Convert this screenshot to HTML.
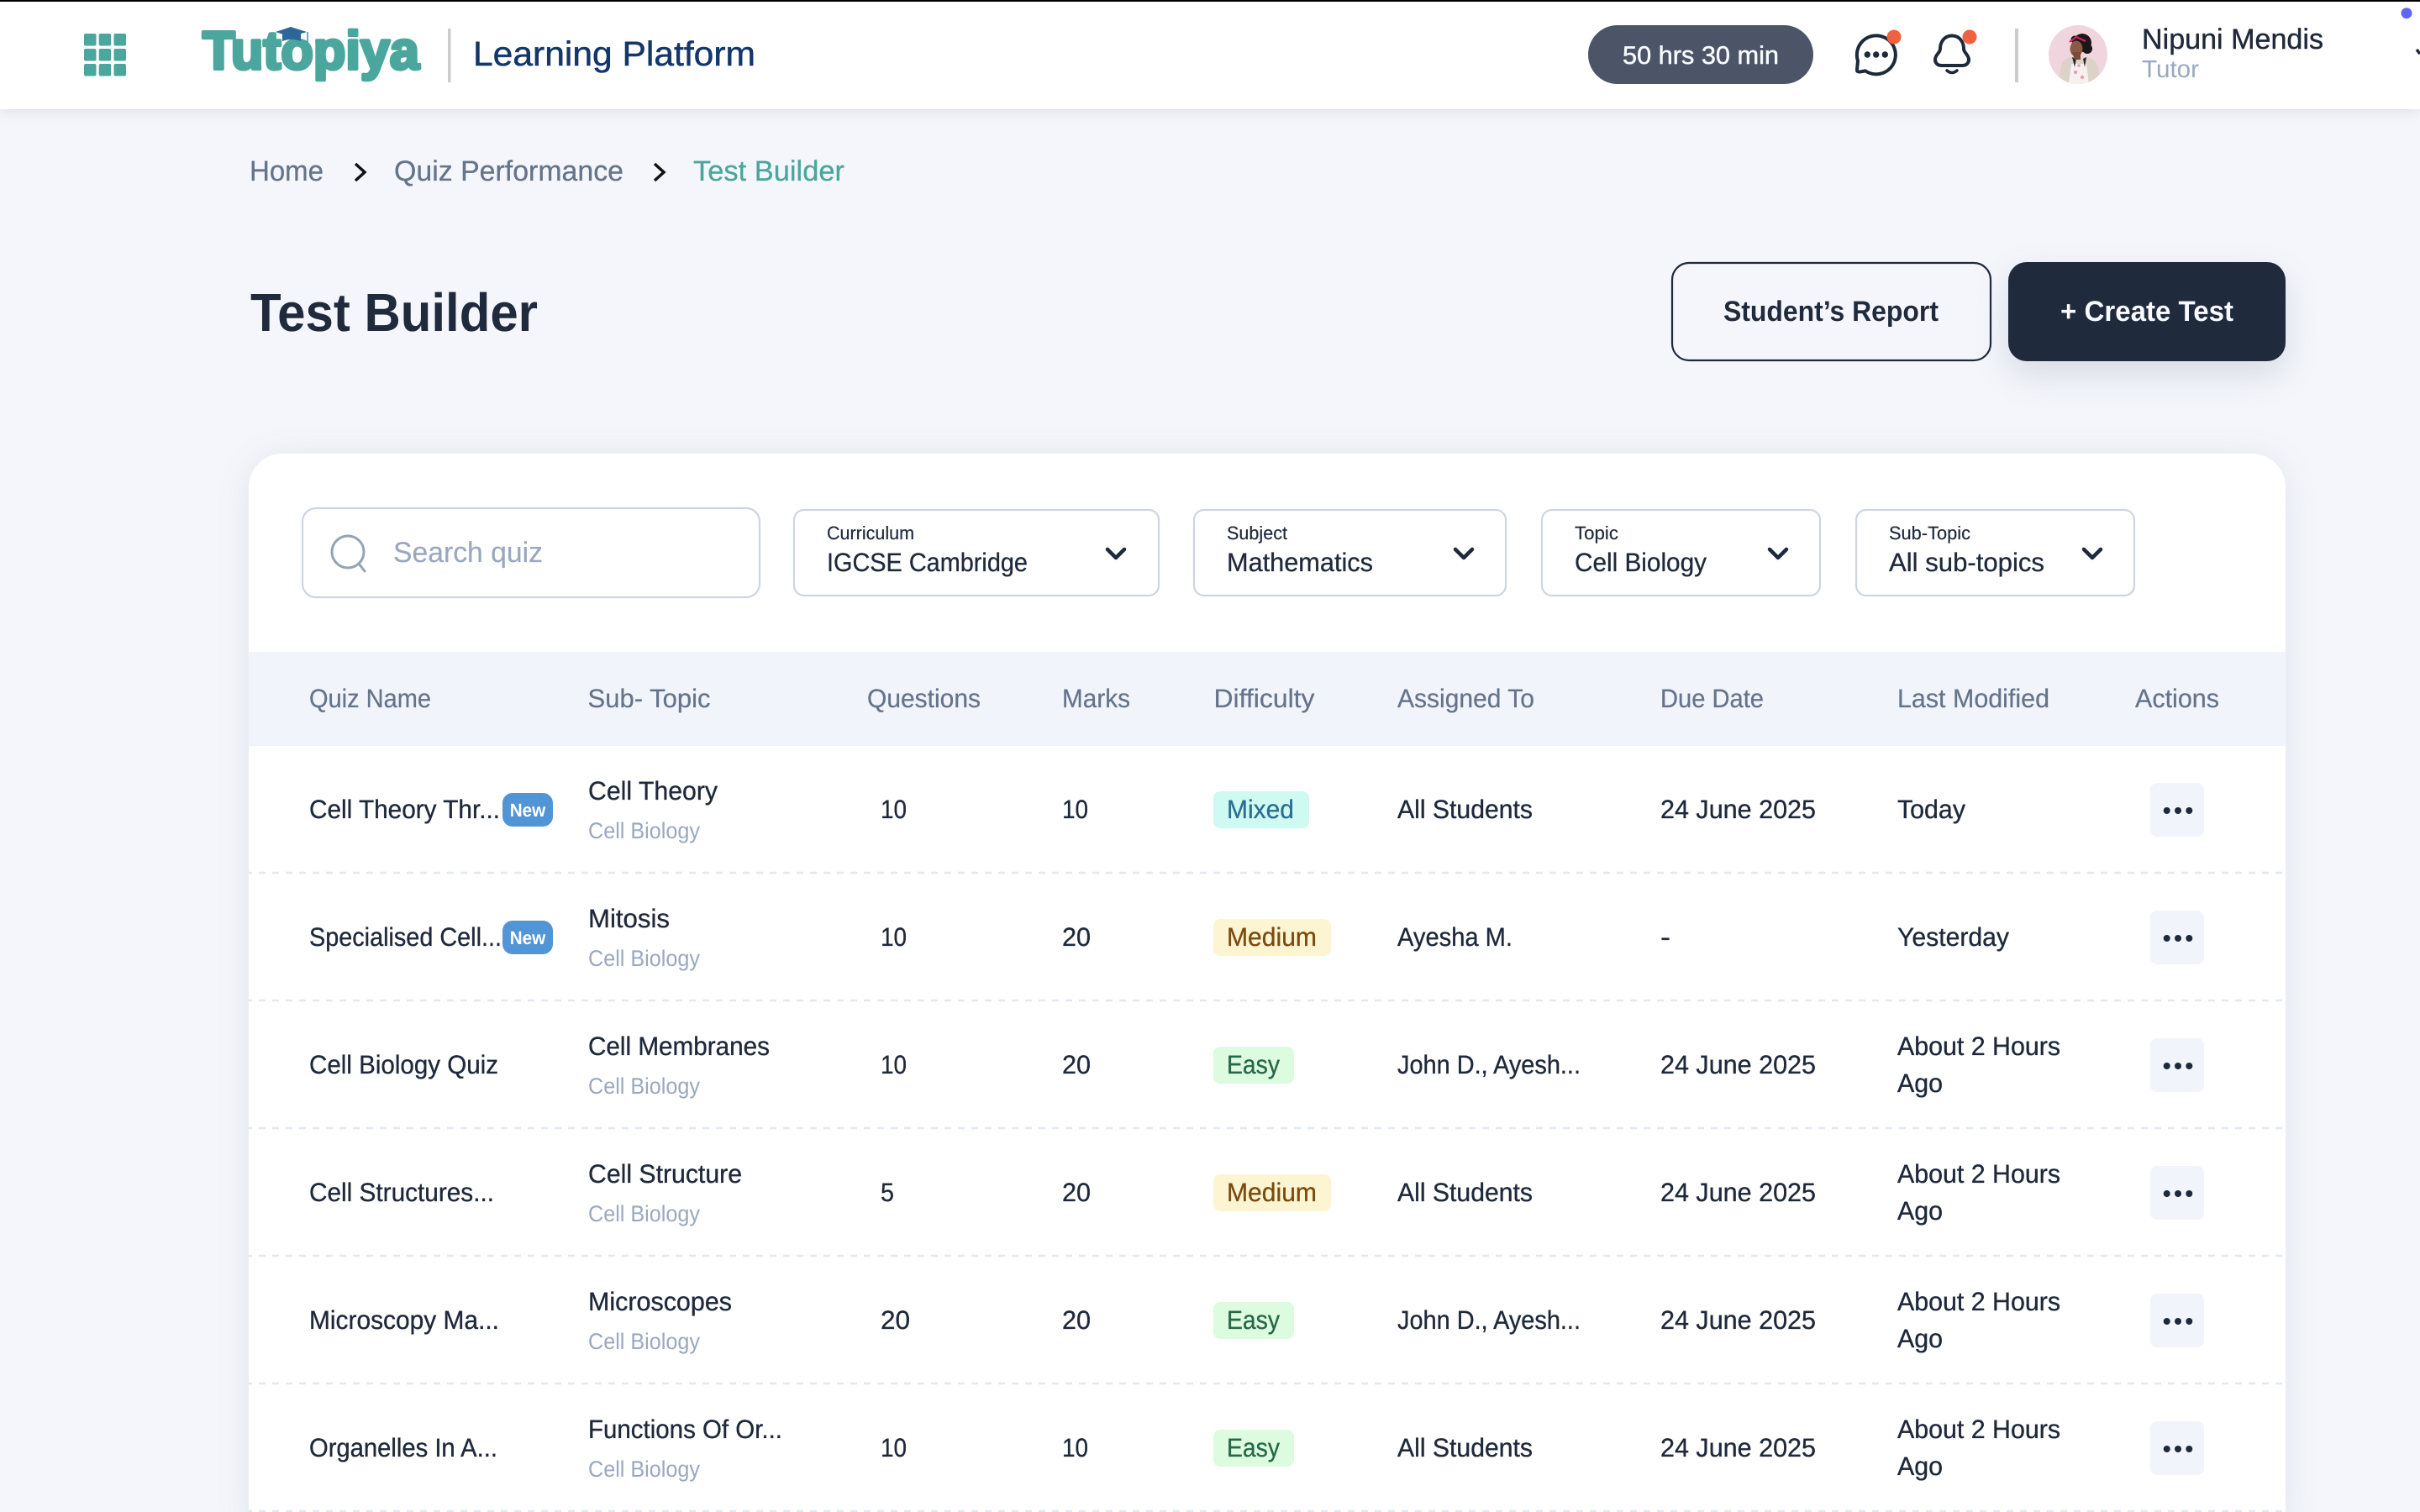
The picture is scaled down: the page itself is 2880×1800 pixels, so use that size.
<!DOCTYPE html>
<html lang="en">
<head>
<meta charset="utf-8">
<title>Test Builder</title>
<style>
html,body{margin:0;padding:0;width:2880px;height:1800px;overflow:hidden;background:#F4F6FB;font-family:"Liberation Sans",sans-serif}
.page{position:relative;width:2880px;height:1800px;overflow:hidden}
.hdr{position:absolute;left:0;top:0;width:2880px;height:130px;background:#fff;box-shadow:0 3px 14px rgba(30,41,59,.1)}
.top{position:absolute;left:0;top:0;width:2880px;height:2px;background:#000}
.card{position:absolute;left:296px;top:540px;width:2424px;height:1300px;background:#fff;border-radius:40px;box-shadow:0 4px 40px rgba(100,116,139,.13)}
.cbtn{position:absolute;left:2390px;top:312px;width:330px;height:118px;border-radius:22px;background:#1F2A3D;box-shadow:0 16px 40px rgba(100,116,139,.2)}
svg{position:absolute;left:0;top:0}
text{font-family:"Liberation Sans",sans-serif;text-rendering:geometricPrecision}
.m{font-size:31px;fill:#1E293B;stroke:#1E293B;stroke-width:.35px}
.s{font-size:27px;fill:#9AA8BF}
.h{font-size:31px;fill:#64748B;stroke:#64748B;stroke-width:.25px}
.l{font-size:22px;fill:#1E293B;stroke:#1E293B;stroke-width:.2px}
.v{font-size:31px;fill:#1E293B;stroke:#1E293B;stroke-width:.3px}
.b{font-size:34px;stroke-width:.3px}
.box{fill:#fff;stroke:#CDD5E2;stroke-width:2.2}
.chev{fill:none;stroke:#1E293B;stroke-width:4.5;stroke-linecap:round;stroke-linejoin:round}
.dash{stroke:#E2E8F0;stroke-width:2.6;stroke-dasharray:8 8;stroke-dashoffset:4;fill:none}
</style>
</head>
<body>
<div class="page">
<div class="hdr"></div>
<div class="top"></div>
<div class="card"></div>
<div class="cbtn"></div>
<svg width="2880" height="1800" viewBox="0 0 2880 1800" xmlns="http://www.w3.org/2000/svg">
<defs><clipPath id="av"><circle cx="2473" cy="65" r="35"/></clipPath></defs>

<!-- grid icon -->
<g fill="#4BA69D">
<rect x="100" y="40" width="14.5" height="14.5" rx="2"/><rect x="117.7" y="40" width="14.5" height="14.5" rx="2"/><rect x="135.5" y="40" width="14.5" height="14.5" rx="2"/>
<rect x="100" y="58" width="14.5" height="14.5" rx="2"/><rect x="117.7" y="58" width="14.5" height="14.5" rx="2"/><rect x="135.5" y="58" width="14.5" height="14.5" rx="2"/>
<rect x="100" y="76" width="14.5" height="14.5" rx="2"/><rect x="117.7" y="76" width="14.5" height="14.5" rx="2"/><rect x="135.5" y="76" width="14.5" height="14.5" rx="2"/>
</g>

<!-- logo -->
<text x="241" y="82" textLength="258" lengthAdjust="spacingAndGlyphs" font-size="64" font-weight="700" fill="#4BA69D" stroke="#4BA69D" stroke-width="4" stroke-linejoin="round">Tutopiya</text>
<path d="M336 40H358V49Q347 45 336 49Z" fill="#2C6799"/>
<path d="M328 38L346 32L365 38L346 44Z" fill="#2C6799"/>
<path d="M366 38V50" stroke="#2C6799" stroke-width="1.2"/>
<rect x="533" y="34" width="3.5" height="64" fill="#CCCCCC"/>
<text x="563" y="78" textLength="336" lengthAdjust="spacingAndGlyphs" font-size="41" fill="#14366B" stroke="#14366B" stroke-width=".5">Learning Platform</text>

<!-- right header -->
<rect x="1890" y="30" width="268" height="70" rx="35" fill="#4B5567"/>
<text x="1931" y="76" textLength="186" lengthAdjust="spacingAndGlyphs" font-size="30" fill="#F8FAFC" stroke="#F8FAFC" stroke-width=".5">50 hrs 30 min</text>

<path d="M2211 72.5A23 23 0 1 1 2220 84.4L2213.5 85.5Q2209.5 86 2210 82.5Z" fill="none" stroke="#1E293B" stroke-width="4" stroke-linejoin="round"/>
<circle cx="2222.3" cy="65" r="3.7" fill="#1E293B"/><circle cx="2232.7" cy="65" r="3.7" fill="#1E293B"/><circle cx="2243.3" cy="65" r="3.7" fill="#1E293B"/>
<circle cx="2254" cy="44" r="8.5" fill="#F0623F"/>

<path d="M2323 42.5C2332 42.5 2337 50 2337 58C2337 63 2343 65 2343 71C2343 75 2340 78 2336 78L2310 78C2306 78 2303 75 2303 71C2303 65 2309 63 2309 58C2309 50 2314 42.5 2323 42.5Z" fill="none" stroke="#1E293B" stroke-width="4"/>
<path d="M2317 84Q2323 89 2329 84" fill="none" stroke="#1E293B" stroke-width="3.5" stroke-linecap="round"/>
<circle cx="2344" cy="44" r="8.5" fill="#F0623F"/>

<rect x="2398" y="34" width="4" height="64" fill="#CCCCCC"/>

<!-- avatar -->
<g clip-path="url(#av)">
<rect x="2438" y="30" width="70" height="70" fill="#F0D5DF"/>
<path d="M2449 100L2453 78Q2456 69 2466 68L2484 68Q2494 70 2497 80L2500 100Z" fill="#DDD2C7"/>
<path d="M2462 100L2465 76H2483L2486 100Z" fill="#F6F0F0"/>
<circle cx="2470" cy="86" r="2.2" fill="#E8A0B0"/><circle cx="2478" cy="92" r="2.2" fill="#E8A0B0"/><circle cx="2474" cy="78" r="1.8" fill="#E8A0B0"/>
<path d="M2466 68L2469 80L2471 70ZM2483 68L2481 80L2479 70Z" fill="#2A2A2E"/>
<circle cx="2478" cy="51" r="11" fill="#1C1718"/><circle cx="2484" cy="58" r="6" fill="#1C1718"/><circle cx="2469" cy="47" r="4.5" fill="#1C1718"/>
<ellipse cx="2471" cy="58" rx="7.5" ry="9.5" fill="#8A5A45"/>
<path d="M2466 62L2469 71H2476L2476 62Z" fill="#7A4C38"/>
<path d="M2463 50L2471 44L2482 49" fill="none" stroke="#D81F6D" stroke-width="2.2"/>
</g>

<text x="2549" y="58" textLength="216" lengthAdjust="spacingAndGlyphs" font-size="34" fill="#1E293B" stroke="#1E293B" stroke-width=".4">Nipuni Mendis</text>
<text x="2549" y="92" textLength="68" lengthAdjust="spacingAndGlyphs" font-size="29" fill="#9AA8BF">Tutor</text>
<circle cx="2864" cy="15.7" r="6.5" fill="#6366F1"/>
<path d="M2876 59L2880 64" stroke="#1E293B" stroke-width="3.5" fill="none"/>

<!-- breadcrumb -->
<text class="b" x="297" y="215" textLength="88" lengthAdjust="spacingAndGlyphs" fill="#64748B" stroke="#64748B">Home</text>
<path d="M423 195L434 205L423 215" fill="none" stroke="#111" stroke-width="3.5"/>
<text class="b" x="469" y="215" textLength="273" lengthAdjust="spacingAndGlyphs" fill="#64748B" stroke="#64748B">Quiz Performance</text>
<path d="M779 195L790 205L779 215" fill="none" stroke="#111" stroke-width="3.5"/>
<text class="b" x="825" y="215" textLength="180" lengthAdjust="spacingAndGlyphs" fill="#4BA69D" stroke="#4BA69D">Test Builder</text>

<!-- title -->
<text x="298" y="394" textLength="342" lengthAdjust="spacingAndGlyphs" font-size="64" font-weight="700" fill="#1F2A3D">Test Builder</text>

<!-- buttons -->
<rect x="1990" y="313" width="379" height="116" rx="20" fill="none" stroke="#1F2A3D" stroke-width="2.2"/>
<text x="2051" y="382" textLength="256" lengthAdjust="spacingAndGlyphs" font-size="34" font-weight="700" fill="#1F2A3D">Student’s Report</text>
<text x="2452" y="382" textLength="206" lengthAdjust="spacingAndGlyphs" font-size="34" font-weight="700" fill="#F8FAFC">+ Create Test</text>

<!-- filters -->
<rect class="box" x="360" y="605" width="544" height="106" rx="16"/>
<circle cx="414" cy="657" r="19" fill="none" stroke="#94A3B8" stroke-width="3"/>
<path d="M427 671L434 680" stroke="#94A3B8" stroke-width="3" stroke-linecap="round"/>
<text x="468" y="669" textLength="178" lengthAdjust="spacingAndGlyphs" font-size="34" fill="#9AA8BF" stroke="#9AA8BF" stroke-width=".2">Search quiz</text>

<rect class="box" x="945" y="607" width="434" height="102" rx="12"/>
<text class="l" x="984" y="642" textLength="104" lengthAdjust="spacingAndGlyphs">Curriculum</text>
<text class="v" x="984" y="680" textLength="239" lengthAdjust="spacingAndGlyphs">IGCSE Cambridge</text>
<path class="chev" d="M1318 654L1328 664L1338 654"/>

<rect class="box" x="1421" y="607" width="371" height="102" rx="12"/>
<text class="l" x="1460" y="642" textLength="72" lengthAdjust="spacingAndGlyphs">Subject</text>
<text class="v" x="1460" y="680" textLength="174" lengthAdjust="spacingAndGlyphs">Mathematics</text>
<path class="chev" d="M1732 654L1742 664L1752 654"/>

<rect class="box" x="1835" y="607" width="331" height="102" rx="12"/>
<text class="l" x="1874" y="642" textLength="52" lengthAdjust="spacingAndGlyphs">Topic</text>
<text class="v" x="1874" y="680" textLength="157" lengthAdjust="spacingAndGlyphs">Cell Biology</text>
<path class="chev" d="M2106 654L2116 664L2126 654"/>

<rect class="box" x="2209" y="607" width="331" height="102" rx="12"/>
<text class="l" x="2248" y="642" textLength="97" lengthAdjust="spacingAndGlyphs">Sub-Topic</text>
<text class="v" x="2248" y="680" textLength="185" lengthAdjust="spacingAndGlyphs">All sub-topics</text>
<path class="chev" d="M2480 654L2490 664L2500 654"/>

<!-- table head -->
<rect x="296" y="776" width="2424" height="112" fill="#F1F4FA"/>
<text class="h" x="368" y="842" textLength="145" lengthAdjust="spacingAndGlyphs">Quiz Name</text>
<text class="h" x="699.5" y="842" textLength="146" lengthAdjust="spacingAndGlyphs">Sub- Topic</text>
<text class="h" x="1032" y="842" textLength="135" lengthAdjust="spacingAndGlyphs">Questions</text>
<text class="h" x="1264" y="842" textLength="81" lengthAdjust="spacingAndGlyphs">Marks</text>
<text class="h" x="1444.5" y="842" textLength="120" lengthAdjust="spacingAndGlyphs">Difficulty</text>
<text class="h" x="1663" y="842" textLength="163" lengthAdjust="spacingAndGlyphs">Assigned To</text>
<text class="h" x="1976" y="842" textLength="123" lengthAdjust="spacingAndGlyphs">Due Date</text>
<text class="h" x="2258" y="842" textLength="181" lengthAdjust="spacingAndGlyphs">Last Modified</text>
<text class="h" x="2541" y="842" textLength="100" lengthAdjust="spacingAndGlyphs">Actions</text>

<!-- row dashed lines -->
<path class="dash" d="M296 1039H2720"/>
<path class="dash" d="M296 1191H2720"/>
<path class="dash" d="M296 1343H2720"/>
<path class="dash" d="M296 1495H2720"/>
<path class="dash" d="M296 1647H2720"/>
<path class="dash" d="M296 1799H2720"/>

<!-- row 1 -->
<text class="m" x="368" y="974" textLength="227" lengthAdjust="spacingAndGlyphs">Cell Theory Thr...</text>
<rect x="598" y="944" width="60" height="40" rx="12" fill="#5295D6"/>
<text x="606.7" y="972" textLength="42.5" lengthAdjust="spacingAndGlyphs" font-size="22" font-weight="700" fill="#fff">New</text>
<text class="m" x="700" y="952" textLength="154" lengthAdjust="spacingAndGlyphs">Cell Theory</text>
<text class="s" x="700" y="998" textLength="133" lengthAdjust="spacingAndGlyphs">Cell Biology</text>
<text class="m" x="1048" y="974" textLength="31" lengthAdjust="spacingAndGlyphs">10</text>
<text class="m" x="1264" y="974" textLength="31" lengthAdjust="spacingAndGlyphs">10</text>
<rect x="1444" y="942" width="114" height="44" rx="8" fill="#CFFAF2"/>
<text x="1460" y="974" textLength="80" lengthAdjust="spacingAndGlyphs" font-size="31" fill="#2C6E91" stroke="#2C6E91" stroke-width=".3">Mixed</text>
<text class="m" x="1663" y="974" textLength="161" lengthAdjust="spacingAndGlyphs">All Students</text>
<text class="m" x="1976" y="974" textLength="185" lengthAdjust="spacingAndGlyphs">24 June 2025</text>
<text class="m" x="2258" y="974" textLength="81" lengthAdjust="spacingAndGlyphs">Today</text>
<rect x="2559" y="932" width="64" height="64" rx="8" fill="#F1F4FA"/>
<g fill="#1E293B"><circle cx="2578.7" cy="965" r="4"/><circle cx="2592" cy="965" r="4"/><circle cx="2605.3" cy="965" r="4"/></g>

<!-- row 2 -->
<text class="m" x="368" y="1126" textLength="229" lengthAdjust="spacingAndGlyphs">Specialised Cell...</text>
<rect x="598" y="1096" width="60" height="40" rx="12" fill="#5295D6"/>
<text x="606.7" y="1124" textLength="42.5" lengthAdjust="spacingAndGlyphs" font-size="22" font-weight="700" fill="#fff">New</text>
<text class="m" x="700" y="1104" textLength="97" lengthAdjust="spacingAndGlyphs">Mitosis</text>
<text class="s" x="700" y="1150" textLength="133" lengthAdjust="spacingAndGlyphs">Cell Biology</text>
<text class="m" x="1048" y="1126" textLength="31" lengthAdjust="spacingAndGlyphs">10</text>
<text class="m" x="1264" y="1126" textLength="34" lengthAdjust="spacingAndGlyphs">20</text>
<rect x="1444" y="1094" width="140" height="44" rx="8" fill="#FDF5D2"/>
<text x="1460" y="1126" textLength="107" lengthAdjust="spacingAndGlyphs" font-size="31" fill="#7A4A10" stroke="#7A4A10" stroke-width=".3">Medium</text>
<text class="m" x="1663" y="1126" textLength="137" lengthAdjust="spacingAndGlyphs">Ayesha M.</text>
<text class="m" x="1976" y="1126" textLength="12" lengthAdjust="spacingAndGlyphs">-</text>
<text class="m" x="2258" y="1126" textLength="133" lengthAdjust="spacingAndGlyphs">Yesterday</text>
<rect x="2559" y="1084" width="64" height="64" rx="8" fill="#F1F4FA"/>
<g fill="#1E293B"><circle cx="2578.7" cy="1117" r="4"/><circle cx="2592" cy="1117" r="4"/><circle cx="2605.3" cy="1117" r="4"/></g>

<!-- row 3 -->
<text class="m" x="368" y="1278" textLength="225" lengthAdjust="spacingAndGlyphs">Cell Biology Quiz</text>
<text class="m" x="700" y="1256" textLength="216" lengthAdjust="spacingAndGlyphs">Cell Membranes</text>
<text class="s" x="700" y="1302" textLength="133" lengthAdjust="spacingAndGlyphs">Cell Biology</text>
<text class="m" x="1048" y="1278" textLength="31" lengthAdjust="spacingAndGlyphs">10</text>
<text class="m" x="1264" y="1278" textLength="34" lengthAdjust="spacingAndGlyphs">20</text>
<rect x="1444" y="1246" width="96" height="44" rx="8" fill="#DCFBDF"/>
<text x="1460" y="1278" textLength="63" lengthAdjust="spacingAndGlyphs" font-size="31" fill="#276749" stroke="#276749" stroke-width=".3">Easy</text>
<text class="m" x="1663" y="1278" textLength="218" lengthAdjust="spacingAndGlyphs">John D., Ayesh...</text>
<text class="m" x="1976" y="1278" textLength="185" lengthAdjust="spacingAndGlyphs">24 June 2025</text>
<text class="m" x="2258" y="1256" textLength="194" lengthAdjust="spacingAndGlyphs">About 2 Hours</text>
<text class="m" x="2258" y="1300" textLength="54" lengthAdjust="spacingAndGlyphs">Ago</text>
<rect x="2559" y="1236" width="64" height="64" rx="8" fill="#F1F4FA"/>
<g fill="#1E293B"><circle cx="2578.7" cy="1269" r="4"/><circle cx="2592" cy="1269" r="4"/><circle cx="2605.3" cy="1269" r="4"/></g>

<!-- row 4 -->
<text class="m" x="368" y="1430" textLength="220" lengthAdjust="spacingAndGlyphs">Cell Structures...</text>
<text class="m" x="700" y="1408" textLength="183" lengthAdjust="spacingAndGlyphs">Cell Structure</text>
<text class="s" x="700" y="1454" textLength="133" lengthAdjust="spacingAndGlyphs">Cell Biology</text>
<text class="m" x="1048" y="1430" textLength="16" lengthAdjust="spacingAndGlyphs">5</text>
<text class="m" x="1264" y="1430" textLength="34" lengthAdjust="spacingAndGlyphs">20</text>
<rect x="1444" y="1398" width="140" height="44" rx="8" fill="#FDF5D2"/>
<text x="1460" y="1430" textLength="107" lengthAdjust="spacingAndGlyphs" font-size="31" fill="#7A4A10" stroke="#7A4A10" stroke-width=".3">Medium</text>
<text class="m" x="1663" y="1430" textLength="161" lengthAdjust="spacingAndGlyphs">All Students</text>
<text class="m" x="1976" y="1430" textLength="185" lengthAdjust="spacingAndGlyphs">24 June 2025</text>
<text class="m" x="2258" y="1408" textLength="194" lengthAdjust="spacingAndGlyphs">About 2 Hours</text>
<text class="m" x="2258" y="1452" textLength="54" lengthAdjust="spacingAndGlyphs">Ago</text>
<rect x="2559" y="1388" width="64" height="64" rx="8" fill="#F1F4FA"/>
<g fill="#1E293B"><circle cx="2578.7" cy="1421" r="4"/><circle cx="2592" cy="1421" r="4"/><circle cx="2605.3" cy="1421" r="4"/></g>

<!-- row 5 -->
<text class="m" x="368" y="1582" textLength="226" lengthAdjust="spacingAndGlyphs">Microscopy Ma...</text>
<text class="m" x="700" y="1560" textLength="171" lengthAdjust="spacingAndGlyphs">Microscopes</text>
<text class="s" x="700" y="1606" textLength="133" lengthAdjust="spacingAndGlyphs">Cell Biology</text>
<text class="m" x="1048" y="1582" textLength="35" lengthAdjust="spacingAndGlyphs">20</text>
<text class="m" x="1264" y="1582" textLength="34" lengthAdjust="spacingAndGlyphs">20</text>
<rect x="1444" y="1550" width="96" height="44" rx="8" fill="#DCFBDF"/>
<text x="1460" y="1582" textLength="63" lengthAdjust="spacingAndGlyphs" font-size="31" fill="#276749" stroke="#276749" stroke-width=".3">Easy</text>
<text class="m" x="1663" y="1582" textLength="218" lengthAdjust="spacingAndGlyphs">John D., Ayesh...</text>
<text class="m" x="1976" y="1582" textLength="185" lengthAdjust="spacingAndGlyphs">24 June 2025</text>
<text class="m" x="2258" y="1560" textLength="194" lengthAdjust="spacingAndGlyphs">About 2 Hours</text>
<text class="m" x="2258" y="1604" textLength="54" lengthAdjust="spacingAndGlyphs">Ago</text>
<rect x="2559" y="1540" width="64" height="64" rx="8" fill="#F1F4FA"/>
<g fill="#1E293B"><circle cx="2578.7" cy="1573" r="4"/><circle cx="2592" cy="1573" r="4"/><circle cx="2605.3" cy="1573" r="4"/></g>

<!-- row 6 -->
<text class="m" x="368" y="1734" textLength="224" lengthAdjust="spacingAndGlyphs">Organelles In A...</text>
<text class="m" x="700" y="1712" textLength="231" lengthAdjust="spacingAndGlyphs">Functions Of Or...</text>
<text class="s" x="700" y="1758" textLength="133" lengthAdjust="spacingAndGlyphs">Cell Biology</text>
<text class="m" x="1048" y="1734" textLength="31" lengthAdjust="spacingAndGlyphs">10</text>
<text class="m" x="1264" y="1734" textLength="31" lengthAdjust="spacingAndGlyphs">10</text>
<rect x="1444" y="1702" width="96" height="44" rx="8" fill="#DCFBDF"/>
<text x="1460" y="1734" textLength="63" lengthAdjust="spacingAndGlyphs" font-size="31" fill="#276749" stroke="#276749" stroke-width=".3">Easy</text>
<text class="m" x="1663" y="1734" textLength="161" lengthAdjust="spacingAndGlyphs">All Students</text>
<text class="m" x="1976" y="1734" textLength="185" lengthAdjust="spacingAndGlyphs">24 June 2025</text>
<text class="m" x="2258" y="1712" textLength="194" lengthAdjust="spacingAndGlyphs">About 2 Hours</text>
<text class="m" x="2258" y="1756" textLength="54" lengthAdjust="spacingAndGlyphs">Ago</text>
<rect x="2559" y="1692" width="64" height="64" rx="8" fill="#F1F4FA"/>
<g fill="#1E293B"><circle cx="2578.7" cy="1725" r="4"/><circle cx="2592" cy="1725" r="4"/><circle cx="2605.3" cy="1725" r="4"/></g>
</svg>
</div>
</body>
</html>
